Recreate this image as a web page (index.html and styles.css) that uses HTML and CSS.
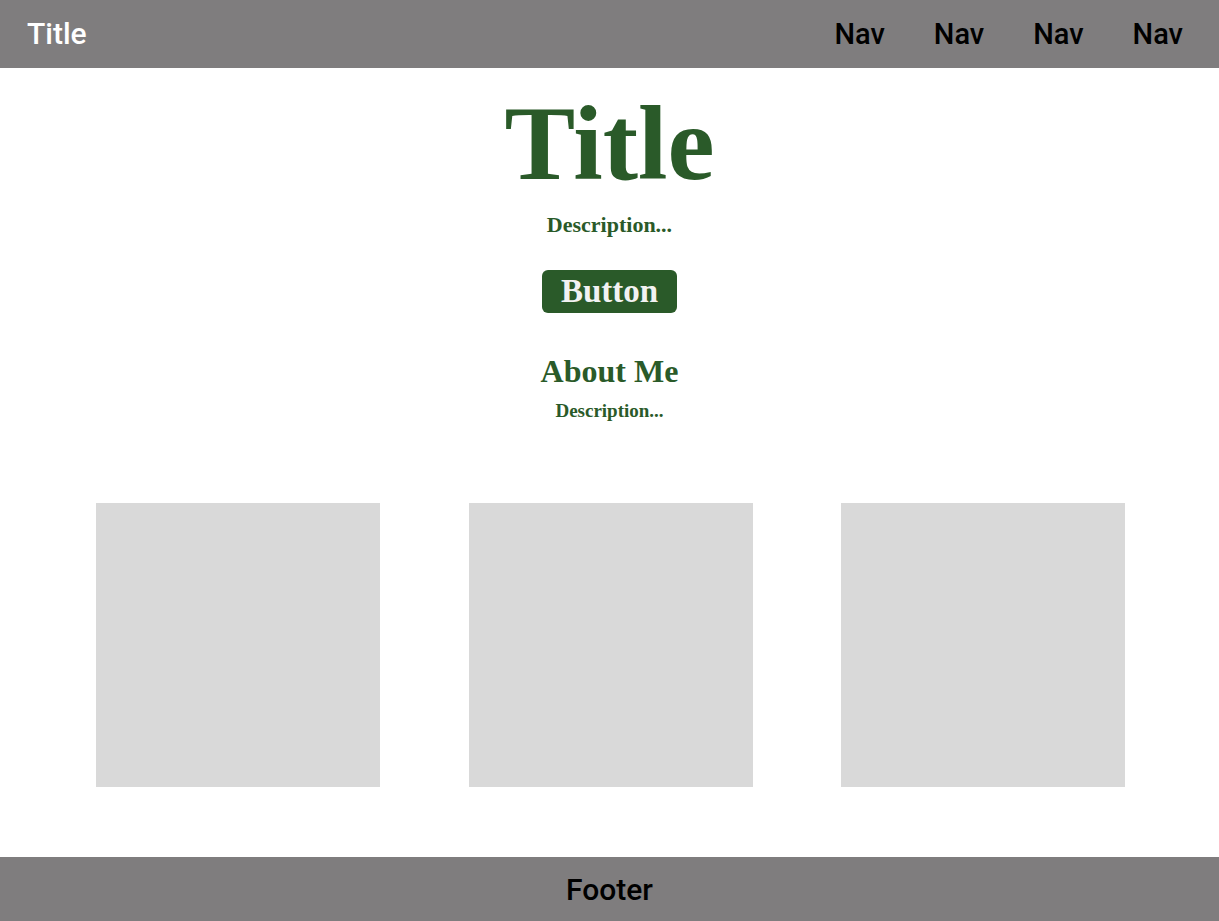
FILE: index.html
```html
<!DOCTYPE html>
<html lang="en">
<head>
<meta charset="utf-8">
<title>Title</title>
<link rel="stylesheet" href="styles.css">
</head>
<body>
<header class="topbar">
  <div class="brand">Title</div>
  <nav class="nav">
    <a class="nav-link" href="#">Nav</a>
    <a class="nav-link" href="#">Nav</a>
    <a class="nav-link" href="#">Nav</a>
    <a class="nav-link" href="#">Nav</a>
  </nav>
</header>
<main class="main">
  <h1 class="hero-title">Title</h1>
  <p class="hero-desc">Description...</p>
  <a class="btn" href="#">Button</a>
  <h2 class="about-title">About Me</h2>
  <p class="about-desc">Description...</p>
  <div class="gallery">
    <div class="tile"></div>
    <div class="tile"></div>
    <div class="tile"></div>
  </div>
</main>
<footer class="footer">Footer</footer>
</body>
</html>
```
FILE: styles.css
```css
* { box-sizing: border-box; }
html, body { margin: 0; padding: 0; }
body {
  min-height: 100vh;
  display: flex;
  flex-direction: column;
  background: #ffffff;
  font-family: Roboto, "Liberation Sans", sans-serif;
}
.topbar {
  height: 68px;
  background: #7f7d7e;
  display: flex;
  align-items: center;
  justify-content: space-between;
  padding: 0 36px 0 27px;
}
.brand {
  color: #ffffff;
  font-size: 30px;
  font-weight: 500;
  line-height: 1;
}
.nav {
  display: flex;
  gap: 49px;
}
.nav-link {
  color: #000000;
  text-decoration: none;
  font-size: 29px;
  font-weight: 500;
  line-height: 1;
}
.main {
  flex: 1;
  display: flex;
  flex-direction: column;
  align-items: center;
  color: #2a5a29;
  font-family: "Liberation Serif", "DejaVu Serif", serif;
}
.hero-title {
  margin: 23px 0 0;
  font-size: 106px;
  line-height: 106px;
  font-weight: 700;
}
.hero-desc {
  margin: 15px 0 0;
  font-size: 22px;
  line-height: 26px;
  font-weight: 700;
}
.btn {
  margin-top: 32px;
  height: 43px;
  padding: 0 19px;
  background: #2a5a29;
  color: #f2f2f2;
  border-radius: 6px;
  text-decoration: none;
  font-size: 33px;
  line-height: 43px;
  font-weight: 700;
}
.about-title {
  margin: 38px 0 0;
  font-size: 32px;
  line-height: 40px;
  font-weight: 700;
}
.about-desc {
  margin: 8px 0 0;
  font-size: 19px;
  line-height: 24px;
  font-weight: 700;
}
.gallery {
  align-self: stretch;
  margin-top: 80px;
  padding: 0 94px 0 96px;
  display: flex;
  justify-content: space-between;
}
.tile {
  width: 284px;
  height: 284px;
  background: #d9d9d9;
}
.footer {
  height: 64px;
  background: #7f7d7e;
  color: #000000;
  display: flex;
  align-items: center;
  justify-content: center;
  font-size: 30px;
  font-weight: 500;
}
```
